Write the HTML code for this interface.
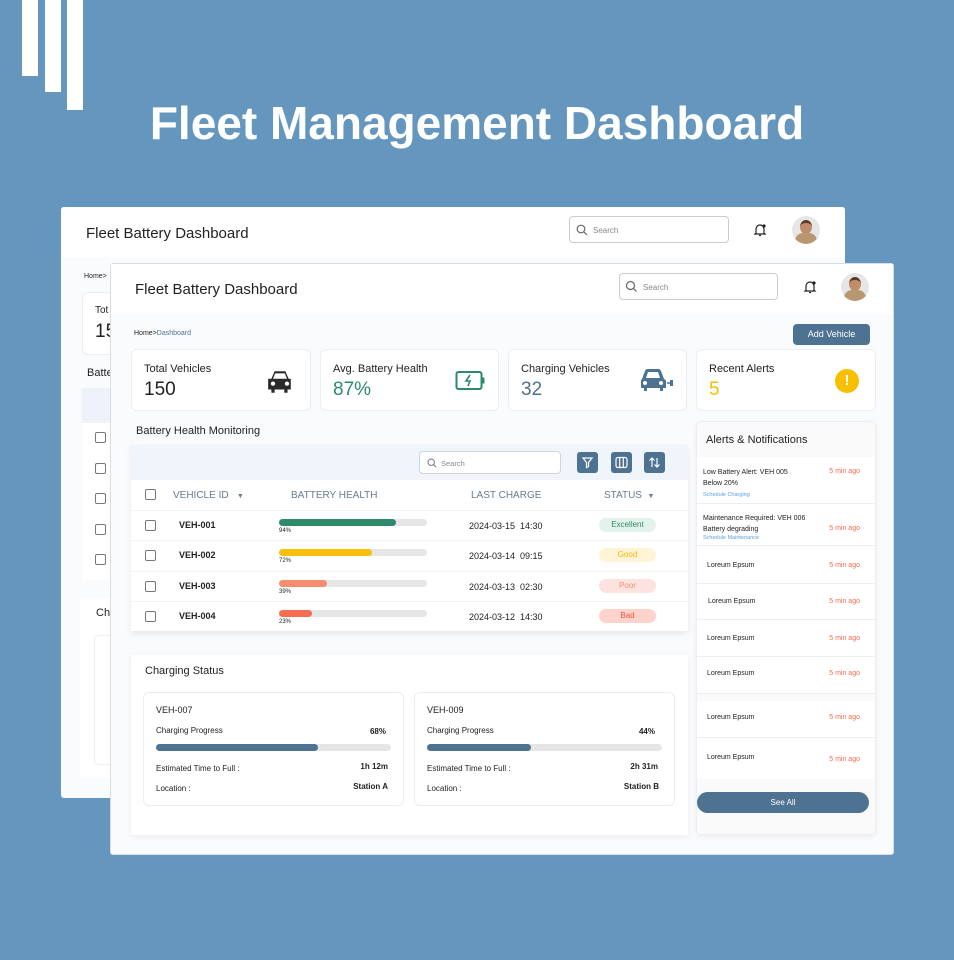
<!DOCTYPE html>
<html><head><meta charset="utf-8"><style>
*{box-sizing:border-box;margin:0;padding:0}
body{width:954px;height:960px;background:#6597be;font-family:"Liberation Sans",sans-serif;position:relative;overflow:hidden;color:#222}
.a{position:absolute}
.bar{position:absolute;top:0;background:#fff;width:16px}
h1{position:absolute;left:0;width:954px;top:96px;text-align:center;color:#fff;font-size:46px;font-weight:bold;letter-spacing:0}
.card{position:absolute;background:#fff;border:1px solid #ebedf0;border-radius:6px}
.stat .t{position:absolute;left:12px;top:13px;font-size:11px;color:#222}
.stat .v{position:absolute;left:12px;top:29px;font-size:19px}
.sm{font-size:9px}
.cb{position:absolute;width:11px;height:11px;border:1.3px solid #777;border-radius:2px;background:#fff}
.hd{font-size:10px;color:#6a7a90;position:absolute;top:490px}
.row{position:absolute;left:131px;width:557px;height:30px;border-top:1px solid #f3f3f3}
.prog{position:absolute;height:7px;background:#e6e6e6;border-radius:4px;width:148px;left:279px}
.prog div{height:7px;border-radius:4px}
.pill{position:absolute;left:599px;width:57px;height:14px;border-radius:7px;font-size:8px;text-align:center;line-height:14px}
.ibtn{position:absolute;top:452px;width:21px;height:21px;background:#4e7291;border-radius:3px}
.al{position:absolute;left:697px;width:178px;background:#fff;border-bottom:1px solid #eceef2;font-size:7px;color:#222}
.al .tm{position:absolute;right:15px;color:#f26b4f;font-size:7px}
</style></head><body>
<div class="bar" style="left:22px;height:76px"></div>
<div class="bar" style="left:45px;height:92px"></div>
<div class="bar" style="left:67px;height:110px"></div>
<h1>Fleet Management Dashboard</h1>

<!-- back card -->
<div class="a" style="left:61px;top:207px;width:784px;height:591px;background:#fafbfd;border-radius:3px">
  <div class="a" style="left:0;top:0;width:784px;height:50px;background:#fff;border-radius:3px 3px 0 0"></div>
  <div class="a" style="left:25px;top:18px;font-size:15px">Fleet Battery Dashboard</div>
  <div class="a" style="left:508px;top:9px;width:160px;height:27px;border:1px solid #ccc;border-radius:4px;background:#fff;font-size:8px;color:#888;padding:9px 0 0 23px">Search
    <svg class="a" style="left:6px;top:7px" width="12" height="12" viewBox="0 0 12 12"><circle cx="5" cy="5" r="3.8" fill="none" stroke="#666" stroke-width="1.2"/><path d="M8 8l3 3" stroke="#666" stroke-width="1.2"/></svg></div>
  <svg class="a" style="left:692px;top:16px" width="14" height="14" viewBox="0 0 14 14"><path d="M3 10V6a4 4 0 0 1 8 0v4l1 1H2z" fill="none" stroke="#222" stroke-width="1.2"/><path d="M6 12.5h2" stroke="#222" stroke-width="1.2"/><circle cx="11" cy="3" r="1.6" fill="#222"/></svg>
  <div class="a" style="left:731px;top:9px;width:28px;height:28px;border-radius:50%;background:#e6e6e6;overflow:hidden"><div class="a" style="left:8px;top:4px;width:12px;height:14px;border-radius:50%;background:#c08c6a;border-top:3px solid #5a3a24"></div><div class="a" style="left:3px;top:17px;width:22px;height:14px;border-radius:8px 8px 0 0;background:#b89670"></div></div>
  <div class="a" style="left:23px;top:66px;font-size:7px">Home&gt;</div>
  <div class="card" style="left:21px;top:85px;width:60px;height:63px"><div class="a" style="left:12px;top:12px;font-size:10px">Tot</div><div class="a" style="left:12px;top:28px;font-size:19px">15</div></div>
  <div class="a" style="left:26px;top:160px;font-size:11px">Batte</div>
  <div class="a" style="left:21px;top:181px;width:60px;height:35px;background:#eef2fa"></div>
  <div class="a" style="left:21px;top:216px;width:60px;height:157px;background:#fff"></div>
  <div class="cb" style="left:34px;top:225px"></div><div class="cb" style="left:34px;top:256px"></div><div class="cb" style="left:34px;top:286px"></div><div class="cb" style="left:34px;top:317px"></div><div class="cb" style="left:34px;top:347px"></div>
  <div class="a" style="left:19px;top:391px;width:60px;height:180px;background:#fff"></div>
  <div class="a" style="left:35px;top:400px;font-size:11px">Ch</div>
  <div class="a" style="left:33px;top:428px;width:40px;height:130px;border:1px solid #eee;border-radius:5px"></div>
</div>

<!-- front card -->
<div class="a" style="left:110px;top:263px;width:784px;height:592px;background:#fafbfd;border:1px solid #d8dde4;border-radius:3px"></div>
<div class="a" style="left:111px;top:264px;width:782px;height:50px;background:#fff"></div>
<div class="a" style="left:135px;top:281px;font-size:15px">Fleet Battery Dashboard</div>
<div class="a" style="left:619px;top:273px;width:159px;height:27px;border:1px solid #ccc;border-radius:4px;background:#fff;font-size:8px;color:#888;padding:9px 0 0 23px">Search
  <svg class="a" style="left:5px;top:6px" width="13" height="13" viewBox="0 0 13 13"><circle cx="5.5" cy="5.5" r="4" fill="none" stroke="#666" stroke-width="1.2"/><path d="M8.5 8.5l3 3" stroke="#666" stroke-width="1.2"/></svg></div>
<svg class="a" style="left:803px;top:280px" width="14" height="14" viewBox="0 0 14 14"><path d="M3 10V6a4 4 0 0 1 8 0v4l1 1H2z" fill="none" stroke="#222" stroke-width="1.2"/><path d="M6 12.5h2" stroke="#222" stroke-width="1.2"/><circle cx="11" cy="3" r="1.6" fill="#222"/></svg>
<div class="a" style="left:841px;top:273px;width:28px;height:28px;border-radius:50%;background:#e6e6e6;overflow:hidden"><div class="a" style="left:8px;top:4px;width:12px;height:14px;border-radius:50%;background:#c08c6a;border-top:3px solid #5a3a24"></div><div class="a" style="left:3px;top:17px;width:22px;height:14px;border-radius:8px 8px 0 0;background:#b89670"></div></div>

<div class="a" style="left:134px;top:330px;font-size:7px">Home&gt;<span style="color:#4e7291">Dashboard</span></div>
<div class="a" style="left:793px;top:324px;width:77px;height:21px;background:#4e7291;border-radius:4px;color:#fff;font-size:9px;text-align:center;line-height:21px">Add Vehicle</div>

<div class="card stat" style="left:131px;top:349px;width:180px;height:62px"><div class="t">Total Vehicles</div><div class="v">150</div>
<svg class="a" style="left:134px;top:19px" width="28" height="26" viewBox="0 0 26 24"><path d="M5 9l3-7h10l3 7h2v10h-3v3h-3v-3H8v3H5v-3H2V9z" fill="#2a2a2a"/><path d="M8.5 4h9l2 5h-13z" fill="#fff"/><circle cx="6.5" cy="13.5" r="2" fill="#fff"/><circle cx="19.5" cy="13.5" r="2" fill="#fff"/></svg></div>
<div class="card stat" style="left:320px;top:349px;width:179px;height:62px"><div class="t">Avg. Battery Health</div><div class="v" style="color:#2a8a6a">87%</div>
<svg class="a" style="left:134px;top:20px" width="30" height="22" viewBox="0 0 30 22"><rect x="1.5" y="2" width="25" height="17" rx="2" fill="none" stroke="#2a8a6a" stroke-width="2"/><rect x="27" y="7.5" width="2.5" height="6" fill="#2a8a6a"/><path d="M15 5l-4 6h4l-2 5" fill="none" stroke="#2a8a6a" stroke-width="1.6"/></svg></div>
<div class="card stat" style="left:508px;top:349px;width:179px;height:62px"><div class="t">Charging Vehicles</div><div class="v" style="color:#4e7291">32</div>
<svg class="a" style="left:129px;top:16px" width="38" height="30" viewBox="0 0 38 28"><path d="M4 12l3-8a3 3 0 0 1 3-2h10a3 3 0 0 1 3 2l3 8a3 3 0 0 1 2 3v6h-3v3h-3v-3H9v3H6v-3H3v-6a3 3 0 0 1 1-3z" fill="#4e7291"/><path d="M8 11l2-6h10l2 6z" fill="#fff"/><circle cx="7" cy="16" r="2" fill="#fff"/><circle cx="23" cy="16" r="2" fill="#fff"/><path d="M29 16h3" stroke="#4e7291" stroke-width="1.5"/><path d="M32 13h3v6h-3z" fill="#4e7291"/></svg></div>
<div class="card stat" style="left:696px;top:349px;width:180px;height:62px"><div class="t">Recent Alerts</div><div class="v" style="color:#f6c000">5</div>
<div class="a" style="left:138px;top:19px;width:24px;height:24px;border-radius:50%;background:#f6c000;color:#fff;font-weight:bold;font-size:15px;text-align:center;line-height:24px">!</div></div>

<div class="a" style="left:136px;top:425px;font-size:11px">Battery Health Monitoring</div>
<div class="a" style="left:131px;top:445px;width:557px;height:186px;background:#fff;box-shadow:0 3px 6px rgba(0,0,0,.08)"></div>
<div class="a" style="left:131px;top:445px;width:557px;height:35px;background:#f0f4fb"></div>
<div class="a" style="left:419px;top:451px;width:142px;height:23px;background:#fff;border:1px solid #cfd3da;border-radius:4px;font-size:7.5px;color:#888;padding:7px 0 0 21px">Search
<svg class="a" style="left:7px;top:6px" width="10" height="10" viewBox="0 0 10 10"><circle cx="4.2" cy="4.2" r="3.2" fill="none" stroke="#777"/><path d="M6.6 6.6l2.6 2.6" stroke="#777"/></svg></div>
<div class="ibtn" style="left:577px"><svg width="21" height="21" viewBox="0 0 21 21"><path d="M6 6h9l-3.5 4.5v4l-2 1v-5z" fill="none" stroke="#fff" stroke-width="1.2"/></svg></div>
<div class="ibtn" style="left:611px"><svg width="21" height="21" viewBox="0 0 21 21"><rect x="5" y="5.5" width="11" height="10" rx="2" fill="none" stroke="#fff" stroke-width="1.2"/><path d="M8.7 5.5v10M12.3 5.5v10" stroke="#fff" stroke-width="1.2"/></svg></div>
<div class="ibtn" style="left:644px"><svg width="21" height="21" viewBox="0 0 21 21"><path d="M8 15V6M5.5 8.5L8 6l2.5 2.5M13 6v9M10.5 12.5L13 15l2.5-2.5" fill="none" stroke="#fff" stroke-width="1.2"/></svg></div>

<div class="cb" style="left:145px;top:489px"></div>
<div class="hd" style="left:173px">VEHICLE ID &nbsp;&nbsp;<span style="font-size:7px">▼</span></div>
<div class="hd" style="left:291px">BATTERY HEALTH</div>
<div class="hd" style="left:471px">LAST CHARGE</div>
<div class="hd" style="left:604px">STATUS &nbsp;<span style="font-size:7px">▼</span></div>

<div class="row" style="top:510px"></div><div class="row" style="top:540px"></div><div class="row" style="top:571px"></div><div class="row" style="top:601px"></div>
<div class="cb" style="left:145px;top:520px"></div><div class="cb" style="left:145px;top:550px"></div><div class="cb" style="left:145px;top:581px"></div><div class="cb" style="left:145px;top:611px"></div>
<div class="a sm" style="left:179px;top:520px;font-weight:bold">VEH-001</div>
<div class="a sm" style="left:179px;top:550px;font-weight:bold">VEH-002</div>
<div class="a sm" style="left:179px;top:581px;font-weight:bold">VEH-003</div>
<div class="a sm" style="left:179px;top:611px;font-weight:bold">VEH-004</div>
<div class="prog" style="top:519px"><div style="width:117px;background:#2e8a68"></div></div><div class="a" style="left:279px;top:528px;font-size:6px">94%</div>
<div class="prog" style="top:549px"><div style="width:93px;background:#f8c00a"></div></div><div class="a" style="left:279px;top:558px;font-size:6px">72%</div>
<div class="prog" style="top:580px"><div style="width:48px;background:#f78c70"></div></div><div class="a" style="left:279px;top:589px;font-size:6px">39%</div>
<div class="prog" style="top:610px"><div style="width:33px;background:#f56e52"></div></div><div class="a" style="left:279px;top:619px;font-size:6px">23%</div>
<div class="a sm" style="left:469px;top:521px">2024-03-15 &nbsp;14:30</div>
<div class="a sm" style="left:469px;top:551px">2024-03-14 &nbsp;09:15</div>
<div class="a sm" style="left:469px;top:582px">2024-03-13 &nbsp;02:30</div>
<div class="a sm" style="left:469px;top:612px">2024-03-12 &nbsp;14:30</div>
<div class="pill" style="top:518px;background:#e3f3ec;color:#2e8a68">Excellent</div>
<div class="pill" style="top:548px;background:#fff5d6;color:#f3b800">Good</div>
<div class="pill" style="top:579px;background:#fde3df;color:#f78c70">Poor</div>
<div class="pill" style="top:609px;background:#fdd3cb;color:#f0553a">Bad</div>

<div class="a" style="left:131px;top:655px;width:557px;height:180px;background:#fff;box-shadow:0 2px 6px rgba(0,0,0,.06)"></div>
<div class="a" style="left:145px;top:665px;font-size:11px">Charging Status</div>
<div class="card" style="left:143px;top:692px;width:261px;height:114px">
 <div class="a sm" style="left:12px;top:12px">VEH-007</div>
 <div class="a" style="left:12px;top:33px;font-size:8px">Charging Progress</div><div class="a" style="right:17px;top:34px;font-size:8px;font-weight:bold">68%</div>
 <div class="a" style="left:12px;top:51px;width:235px;height:7px;border-radius:4px;background:#e6e6e6"><div style="width:162px;height:7px;border-radius:4px;background:#4e7291"></div></div>
 <div class="a" style="left:12px;top:71px;font-size:8px">Estimated Time to Full :</div><div class="a" style="right:15px;top:69px;font-size:8px;font-weight:bold">1h 12m</div>
 <div class="a" style="left:12px;top:91px;font-size:8px">Location :</div><div class="a" style="right:15px;top:89px;font-size:8px;font-weight:bold">Station A</div>
</div>
<div class="card" style="left:414px;top:692px;width:261px;height:114px">
 <div class="a sm" style="left:12px;top:12px">VEH-009</div>
 <div class="a" style="left:12px;top:33px;font-size:8px">Charging Progress</div><div class="a" style="right:19px;top:34px;font-size:8px;font-weight:bold">44%</div>
 <div class="a" style="left:12px;top:51px;width:235px;height:7px;border-radius:4px;background:#e6e6e6"><div style="width:104px;height:7px;border-radius:4px;background:#4e7291"></div></div>
 <div class="a" style="left:12px;top:71px;font-size:8px">Estimated Time to Full :</div><div class="a" style="right:16px;top:69px;font-size:8px;font-weight:bold">2h 31m</div>
 <div class="a" style="left:12px;top:91px;font-size:8px">Location :</div><div class="a" style="right:15px;top:89px;font-size:8px;font-weight:bold">Station B</div>
</div>

<div class="a" style="left:696px;top:421px;width:180px;height:414px;background:#fafafa;border:1px solid #eceef2;border-radius:5px;box-shadow:0 2px 6px rgba(0,0,0,.06)"></div>
<div class="a" style="left:706px;top:434px;font-size:11px">Alerts &amp; Notifications</div>
<div class="al" style="top:457px;height:47px"><div class="a" style="left:6px;top:10px;line-height:11px">Low Battery Alert: VEH 005<br>Below 20%</div><div class="tm" style="top:11px">5 min ago</div><div class="a" style="left:6px;top:35px;font-size:5.5px;color:#5aa0e0">Schedule Charging</div></div>
<div class="al" style="top:504px;height:42px"><div class="a" style="left:6px;top:9px;line-height:11px">Maintenance Required: VEH 006<br>Battery degrading</div><div class="tm" style="top:21px">5 min ago</div><div class="a" style="left:6px;top:31px;font-size:5.5px;color:#5aa0e0">Schedule Maintenance</div></div>
<div class="al" style="top:546px;height:38px"><div class="a" style="left:10px;top:16px">Loreum Epsum</div><div class="tm" style="top:16px">5 min ago</div></div>
<div class="al" style="top:584px;height:36px"><div class="a" style="left:11px;top:14px">Loreum Epsum</div><div class="tm" style="top:14px">5 min ago</div></div>
<div class="al" style="top:620px;height:37px"><div class="a" style="left:10px;top:15px">Loreum Epsum</div><div class="tm" style="top:15px">5 min ago</div></div>
<div class="al" style="top:657px;height:37px"><div class="a" style="left:10px;top:13px">Loreum Epsum</div><div class="tm" style="top:13px">5 min ago</div></div>
<div class="al" style="top:701px;height:37px"><div class="a" style="left:10px;top:13px">Loreum Epsum</div><div class="tm" style="top:13px">5 min ago</div></div>
<div class="al" style="top:738px;height:41px;border-bottom:none"><div class="a" style="left:10px;top:16px">Loreum Epsum</div><div class="tm" style="top:18px">5 min ago</div></div>
<div class="a" style="left:697px;top:792px;width:172px;height:21px;background:#4e7291;border-radius:11px;color:#fff;font-size:8px;text-align:center;line-height:21px">See All</div>
</body></html>
